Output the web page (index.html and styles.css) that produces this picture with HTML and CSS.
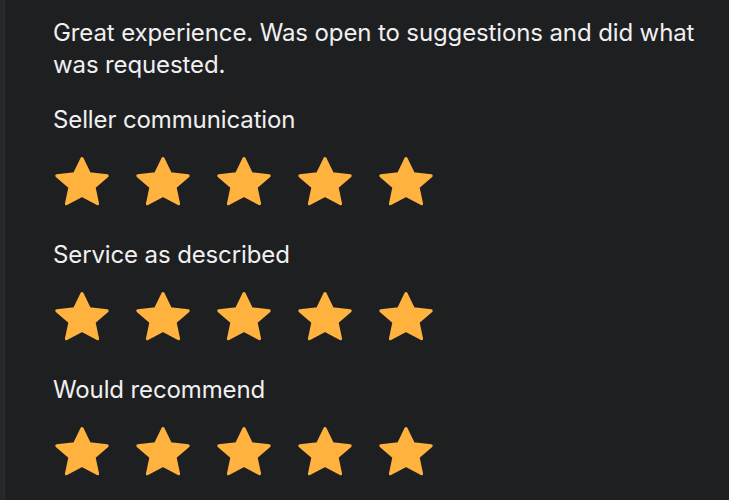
FILE: index.html
```html
<!DOCTYPE html>
<html lang="en">
<head>
<meta charset="utf-8">
<title>Review</title>
<link rel="stylesheet" href="styles.css">
</head>
<body>
<svg class="defs" width="0" height="0" aria-hidden="true">
  <symbol id="star" viewBox="0 0 56 52">
    <polygon points="28,3.5 35.5,18.8 53.2,20.8 40.1,32.2 43.6,48.7 28,40.5 12.4,48.7 15.9,32.2 2.8,20.8 20.5,18.8" fill="#ffb33e" stroke="#ffb33e" stroke-width="3" stroke-linejoin="round"/>
  </symbol>
</svg>
<div class="page">
  <div class="rail"></div>
  <main class="review">
    <p class="desc">Great experience. Was open to suggestions and did what was requested.</p>
    <section class="rating">
      <h3 class="label">Seller communication</h3>
      <div class="stars">
        <svg class="star" viewBox="0 0 56 52"><use href="#star"/></svg>
        <svg class="star" viewBox="0 0 56 52"><use href="#star"/></svg>
        <svg class="star" viewBox="0 0 56 52"><use href="#star"/></svg>
        <svg class="star" viewBox="0 0 56 52"><use href="#star"/></svg>
        <svg class="star" viewBox="0 0 56 52"><use href="#star"/></svg>
      </div>
    </section>
    <section class="rating">
      <h3 class="label">Service as described</h3>
      <div class="stars">
        <svg class="star" viewBox="0 0 56 52"><use href="#star"/></svg>
        <svg class="star" viewBox="0 0 56 52"><use href="#star"/></svg>
        <svg class="star" viewBox="0 0 56 52"><use href="#star"/></svg>
        <svg class="star" viewBox="0 0 56 52"><use href="#star"/></svg>
        <svg class="star" viewBox="0 0 56 52"><use href="#star"/></svg>
      </div>
    </section>
    <section class="rating">
      <h3 class="label">Would recommend</h3>
      <div class="stars">
        <svg class="star" viewBox="0 0 56 52"><use href="#star"/></svg>
        <svg class="star" viewBox="0 0 56 52"><use href="#star"/></svg>
        <svg class="star" viewBox="0 0 56 52"><use href="#star"/></svg>
        <svg class="star" viewBox="0 0 56 52"><use href="#star"/></svg>
        <svg class="star" viewBox="0 0 56 52"><use href="#star"/></svg>
      </div>
    </section>
  </main>
</div>
</body>
</html>
```
FILE: styles.css
```css
html, body {
  margin: 0;
  padding: 0;
  background: #1e1f21;
  height: 100%;
  overflow: hidden;
}
.defs {
  position: absolute;
  width: 0;
  height: 0;
}
.page {
  display: flex;
  min-height: 500px;
  font-family: Inter, "Noto Sans", sans-serif;
  color: #f0f0f1;
  letter-spacing: -0.12px;
}
.rail {
  width: 4px;
  flex: none;
  background: #262729;
  border-right: 1px solid #2c2d2f;
}
.review {
  flex: 1;
  padding: 17px 0 0 48px;
}
.desc {
  margin: 0 0 23px;
  font-size: 24px;
  line-height: 32px;
  font-weight: 400;
  max-width: 660px;
}
.rating {
  display: flex;
  flex-direction: column;
  margin-bottom: 32px;
}
.label {
  margin: 0;
  font-size: 24px;
  line-height: 32px;
  font-weight: 400;
}
.stars {
  display: flex;
  gap: 25px;
  margin-top: 19px;
  margin-left: 1px;
}
.star {
  width: 56px;
  height: 52px;
  display: block;
}
```
